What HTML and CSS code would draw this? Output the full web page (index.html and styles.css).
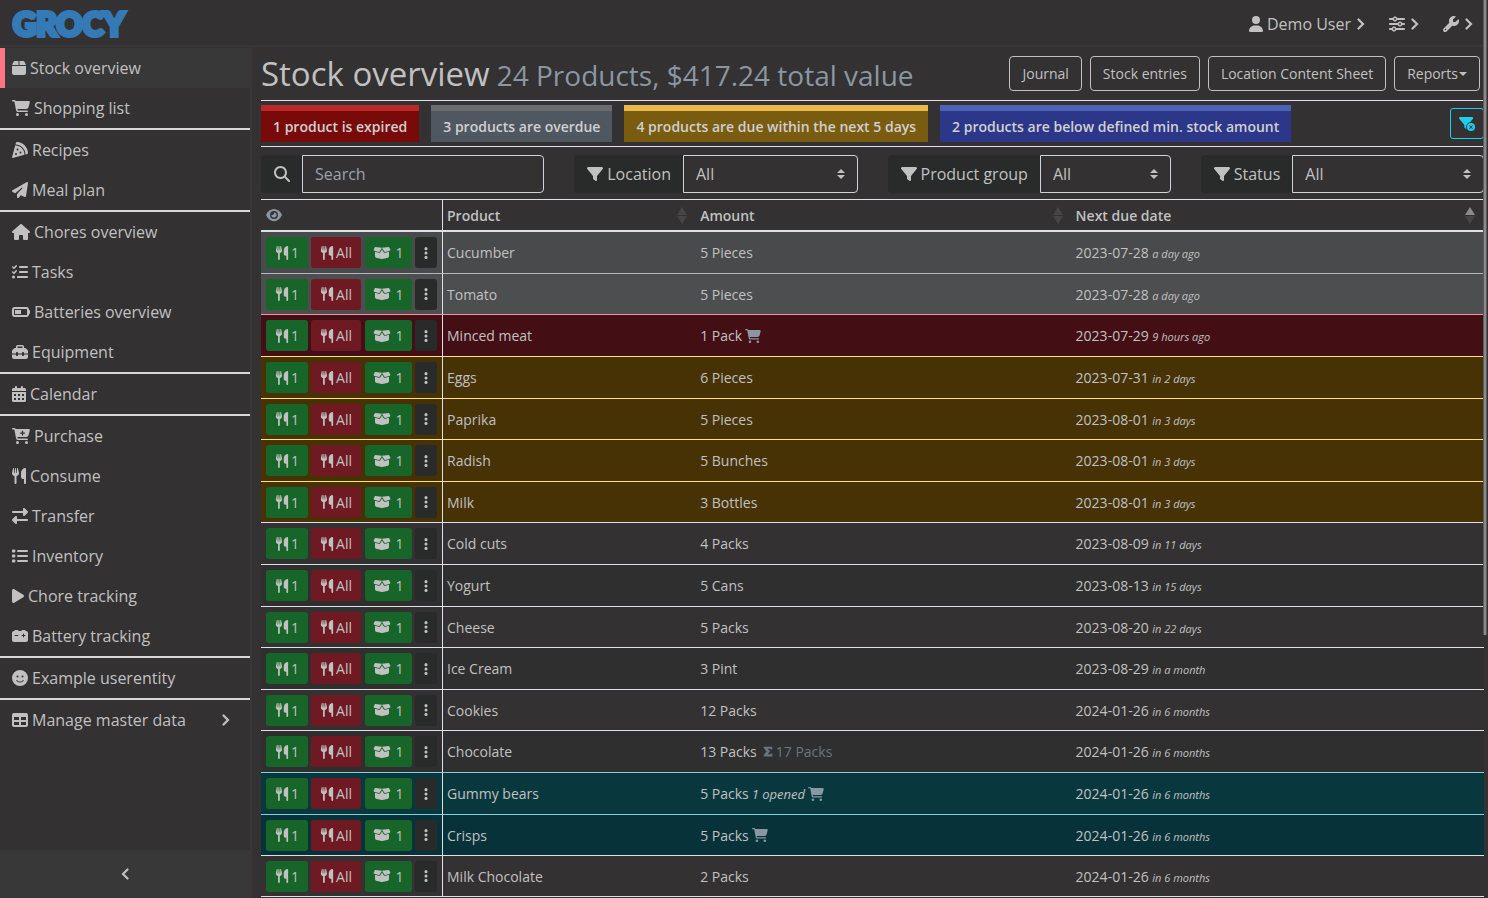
FILE: index.html
```html
<!DOCTYPE html>
<html lang="en">
<head>
<meta charset="utf-8">
<title>Stock overview</title>
<link rel="stylesheet" href="styles.css">
</head>
<body>
<svg class="sprite" aria-hidden="true">
  <symbol id="box" viewBox="0 0 448 512"><path d="M50.7 58.5L0 160H208V32H93.7C75.5 32 58.9 42.3 50.7 58.5zM240 160H448L397.3 58.5C389.1 42.3 372.5 32 354.3 32H240V160zm208 32H0V416c0 35.3 28.7 64 64 64H384c35.3 0 64-28.7 64-64V192z"/></symbol>
  <symbol id="cart" viewBox="0 0 576 512"><path d="M0 24C0 10.7 10.7 0 24 0H69.5c22 0 41.5 12.8 50.6 32h411c26.3 0 45.5 25 38.6 50.4l-41 152.3c-8.5 31.4-37 53.3-69.5 53.3H170.7l5.4 28.5c2.2 11.3 12.1 19.5 23.6 19.5H488c13.3 0 24 10.7 24 24s-10.7 24-24 24H199.7c-34.6 0-64.3-24.6-70.7-58.5L77.4 54.5c-.7-3.8-4-6.5-7.9-6.5H24C10.7 48 0 37.3 0 24zM128 464a48 48 0 1 1 96 0 48 48 0 1 1 -96 0zm336-48a48 48 0 1 1 0 96 48 48 0 1 1 0-96z"/></symbol>
  <symbol id="cart-plus" viewBox="0 0 576 512"><path fill-rule="evenodd" d="M0 24C0 10.7 10.7 0 24 0H69.5c22 0 41.5 12.8 50.6 32h411c26.3 0 45.5 25 38.6 50.4l-41 152.3c-8.5 31.4-37 53.3-69.5 53.3H170.7l5.4 28.5c2.2 11.3 12.1 19.5 23.6 19.5H488c13.3 0 24 10.7 24 24s-10.7 24-24 24H199.7c-34.6 0-64.3-24.6-70.7-58.5L77.4 54.5c-.7-3.8-4-6.5-7.9-6.5H24C10.7 48 0 37.3 0 24zM128 464a48 48 0 1 1 96 0 48 48 0 1 1 -96 0zm336-48a48 48 0 1 1 0 96 48 48 0 1 1 0-96zM252 160c0 11 9 20 20 20h44v44c0 11 9 20 20 20s20-9 20-20V180h44c11 0 20-9 20-20s-9-20-20-20H356V96c0-11-9-20-20-20s-20 9-20 20v44H272c-11 0-20 9-20 20z"/></symbol>
  <symbol id="pizza" viewBox="0 0 512 512"><path d="M169.7 .9c-22.8-1.6-41.9 14-47.5 34.7L110.4 80c.5 0 1.1 0 1.6 0c176.7 0 320 143.3 320 320c0 .5 0 1.1 0 1.6l44.4-11.8c20.8-5.5 36.3-24.7 34.7-47.5C498.5 159.5 352.5 13.5 169.7 .9zM399.8 410.2c.1-3.4 .2-6.8 .2-10.2c0-159.1-128.9-288-288-288c-3.4 0-6.8 .1-10.2 .2L.5 491.9c-1.5 5.5 .1 11.4 4.1 15.4s9.9 5.6 15.4 4.1L399.8 410.2zM176 208a32 32 0 1 1 0 64 32 32 0 1 1 0-64zm64 128a32 32 0 1 1 64 0 32 32 0 1 1 -64 0zM96 384a32 32 0 1 1 64 0 32 32 0 1 1 -64 0z"/></symbol>
  <symbol id="plane" viewBox="0 0 512 512"><path d="M498.1 5.6c10.1 7 15.4 19.1 13.5 31.2l-64 416c-1.5 9.7-7.4 18.2-16 23s-18.9 5.4-28 1.6L284 427.7l-68.5 74.1c-8.9 9.7-22.9 12.9-35.2 8.1S160 493.2 160 480V396.4c0-4 1.5-7.8 4.2-10.7L331.8 202.8c5.8-6.3 5.6-16-.4-22s-15.7-6.4-22-.7L106 360.8 17.7 316.6C7.1 311.3 .3 300.7 0 288.9s5.9-22.8 16.1-28.7l448-256c10.7-6.1 23.9-5.5 34 1.4z"/></symbol>
  <symbol id="house" viewBox="0 0 576 512"><path d="M575.8 255.5c0 18-15 32.1-32 32.1h-32l.7 160.2c0 2.7-.2 5.4-.5 8.1V472c0 22.1-17.9 40-40 40H392c-22.1 0-40-17.9-40-40V384c0-17.7-14.3-32-32-32H256c-17.7 0-32 14.3-32 32v88c0 22.1-17.9 40-40 40H104c-22.1 0-40-17.9-40-40V287.6H32c-18 0-32-14-32-32.1c0-9 3-17 10-24L266.4 8c7-7 15-8 22-8s15 2 21 7L564.8 231.5c8 7 12 15 11 24z"/></symbol>
  <symbol id="tasks" viewBox="0 0 512 512"><path d="M152.1 38.2c9.9 8.9 10.7 24 1.8 33.9l-72 80c-4.4 4.9-10.6 7.8-17.2 7.9s-12.9-2.4-17.6-7L7 113C-2.3 103.6-2.3 88.4 7 79s24.6-9.4 33.9 0l22.1 22.1 55.1-61.2c8.9-9.9 24-10.7 33.9-1.8zm0 160c9.9 8.9 10.7 24 1.8 33.9l-72 80c-4.4 4.9-10.6 7.8-17.2 7.9s-12.9-2.4-17.6-7L7 273c-9.4-9.4-9.4-24.6 0-33.9s24.6-9.4 33.9 0l22.1 22.1 55.1-61.2c8.9-9.9 24-10.7 33.9-1.8zM224 96c0-17.7 14.3-32 32-32H480c17.7 0 32 14.3 32 32s-14.3 32-32 32H256c-17.7 0-32-14.3-32-32zm0 160c0-17.7 14.3-32 32-32H480c17.7 0 32 14.3 32 32s-14.3 32-32 32H256c-17.7 0-32-14.3-32-32zM160 416c0-17.7 14.3-32 32-32H480c17.7 0 32 14.3 32 32s-14.3 32-32 32H192c-17.7 0-32-14.3-32-32zM48 368a48 48 0 1 1 0 96 48 48 0 1 1 0-96z"/></symbol>
  <symbol id="battery" viewBox="0 0 576 512"><path fill-rule="evenodd" d="M80 96C35.800 96 0 131.800 0 176V336c0 44.200 35.800 80 80 80H464c44.200 0 80-35.800 80-80V320c17.700 0 32-14.300 32-32V224c0-17.700-14.300-32-32-32V176c0-44.200-35.800-80-80-80H80zM80 160H464a16 16 0 0 1 16 16V336a16 16 0 0 1-16 16H80a16 16 0 0 1-16-16V176a16 16 0 0 1 16-16z"/><path d="M96 192H288V320H96z"/></symbol>
  <symbol id="toolbox" viewBox="0 0 512 512"><path d="M176 88v40H336V88c0-4.400-3.600-8-8-8H184c-4.400 0-8 3.600-8 8zm-48 40V88c0-30.900 25.100-56 56-56H328c30.900 0 56 25.100 56 56v40h28.100c12.700 0 24.900 5.100 33.900 14.100l51.900 51.900c9 9 14.100 21.200 14.100 33.900V304H384V288c0-17.700-14.300-32-32-32s-32 14.300-32 32v16H192V288c0-17.700-14.300-32-32-32s-32 14.300-32 32v16H0V227.900c0-12.700 5.100-24.900 14.100-33.900l51.900-51.900c9-9 21.200-14.100 33.900-14.100H128zM0 416V336H128v16c0 17.700 14.300 32 32 32s32-14.300 32-32V336H320v16c0 17.700 14.300 32 32 32s32-14.300 32-32V336H512v80c0 35.300-28.700 64-64 64H64c-35.300 0-64-28.700-64-64z"/></symbol>
  <symbol id="calendar" viewBox="0 0 448 512"><path fill-rule="evenodd" d="M128 0c17.700 0 32 14.300 32 32V64H288V32c0-17.700 14.300-32 32-32s32 14.300 32 32V64h48c26.500 0 48 21.500 48 48v48H0V112C0 85.500 21.500 64 48 64H96V32c0-17.700 14.300-32 32-32zM0 192H448V464c0 26.500-21.500 48-48 48H48c-26.500 0-48-21.500-48-48zM64 256h64v64H64zM192 256h64v64H192zM320 256h64v64H320zM64 384h64v64H64zM192 384h64v64H192zM320 384h64v64H320z"/></symbol>
  <symbol id="utensils" viewBox="0 0 448 512"><path d="M416 0C400 0 288 32 288 176V288c0 35.300 28.700 64 64 64h32V480c0 17.700 14.300 32 32 32s32-14.300 32-32V32c0-17.700-14.300-32-32-32zM64 16C64 7.800 57.900 1 49.700 .1S34.200 4.600 32.400 12.500L2.100 148.800C.7 155.100 0 161.500 0 167.900c0 45.900 35.100 83.600 80 87.700V480c0 17.700 14.300 32 32 32s32-14.300 32-32V255.600c44.900-4.100 80-41.800 80-87.700c0-6.400-.7-12.800-2.100-19.100L191.600 12.500c-1.800-8-9.300-13.300-17.400-12.400S160 7.800 160 16V150.200c0 5.400-4.400 9.800-9.800 9.800c-5.100 0-9.300-3.900-9.800-9L127.900 14.600C127.200 6.300 120.300 0 112 0s-15.200 6.300-15.900 14.600L83.700 151c-.5 5.100-4.700 9-9.800 9c-5.400 0-9.800-4.400-9.800-9.800V16z"/></symbol>
  <symbol id="transfer" viewBox="0 0 512 512"><path d="M32 96H352V32c0-12.900 7.800-24.600 19.800-29.600s25.700-2.200 34.900 6.900l96 96c6 6 9.400 14.100 9.400 22.600s-3.400 16.600-9.400 22.600l-96 96c-9.200 9.200-22.900 11.900-34.900 6.900s-19.800-16.600-19.800-29.600V160H32c-17.700 0-32-14.300-32-32s14.300-32 32-32zM480 352c17.700 0 32 14.300 32 32s-14.300 32-32 32H160v64c0 12.900-7.800 24.600-19.800 29.600s-25.700 2.200-34.900-6.900l-96-96c-6-6-9.400-14.100-9.400-22.600s3.400-16.600 9.400-22.600l96-96c9.200-9.200 22.900-11.900 34.900-6.900s19.800 16.600 19.800 29.600v64H480z"/></symbol>
  <symbol id="list" viewBox="0 0 512 512"><rect x="0" y="48" width="104" height="96" rx="24"/><rect x="0" y="208" width="104" height="96" rx="24"/><rect x="0" y="368" width="104" height="96" rx="24"/><rect x="160" y="64" width="352" height="64" rx="32"/><rect x="160" y="224" width="352" height="64" rx="32"/><rect x="160" y="384" width="352" height="64" rx="32"/></symbol>
  <symbol id="play" viewBox="0 0 384 512"><path d="M73 39c-14.800-9.100-33.400-9.400-48.500-.9S0 62.600 0 80V432c0 17.400 9.400 33.400 24.500 41.900s33.700 8.100 48.500-.9L361 297c14.300-8.700 23-24.200 23-41s-8.700-32.200-23-41L73 39z"/></symbol>
  <symbol id="car-battery" viewBox="0 0 512 512"><path d="M80 96c0-17.700 14.300-32 32-32h64c17.700 0 32 14.300 32 32h96c0-17.700 14.300-32 32-32h64c17.700 0 32 14.300 32 32h16c35.300 0 64 28.700 64 64V384c0 35.300-28.700 64-64 64H64c-35.300 0-64-28.700-64-64V160c0-35.300 28.700-64 64-64zm304 96c0-8.800-7.200-16-16-16s-16 7.200-16 16v32H320c-8.800 0-16 7.200-16 16s7.200 16 16 16h32v32c0 8.800 7.200 16 16 16s16-7.200 16-16V256h32c8.800 0 16-7.200 16-16s-7.200-16-16-16H384V192zM80 240c0 8.800 7.200 16 16 16h96c8.800 0 16-7.200 16-16s-7.200-16-16-16H96c-8.800 0-16 7.200-16 16z"/></symbol>
  <symbol id="smile" viewBox="0 0 512 512"><path d="M256 512A256 256 0 1 0 256 0a256 256 0 1 0 0 512zM164.100 325.500C182 346.200 212.600 368 256 368s74-21.800 91.900-42.500c5.800-6.700 15.900-7.400 22.600-1.600s7.400 15.900 1.600 22.600C349.800 372.100 311.100 400 256 400s-93.800-27.900-116.100-53.500c-5.800-6.700-5.100-16.800 1.600-22.600s16.800-5.100 22.600 1.600zM144.400 208a32 32 0 1 1 64 0 32 32 0 1 1 -64 0zm192-32a32 32 0 1 1 0 64 32 32 0 1 1 0-64z"/></symbol>
  <symbol id="table" viewBox="0 0 512 512"><path d="M64 256V160H224v96H64zm0 64H224v96H64V320zm224 96V320H448v96H288zM448 256H288V160H448v96zM64 32C28.700 32 0 60.700 0 96V416c0 35.300 28.700 64 64 64H448c35.300 0 64-28.700 64-64V96c0-35.300-28.700-64-64-64H64z"/></symbol>
  <symbol id="user" viewBox="0 0 448 512"><path d="M224 256A128 128 0 1 0 224 0a128 128 0 1 0 0 256zm-45.700 48C79.800 304 0 383.800 0 482.300C0 498.700 13.300 512 29.700 512H418.300c16.400 0 29.700-13.300 29.700-29.700C448 383.800 368.200 304 269.700 304H178.300z"/></symbol>
  <symbol id="sliders" viewBox="0 0 512 512"><path d="M0 416c0 17.700 14.300 32 32 32h54.700c12.300 28.300 40.500 48 73.300 48s61-19.700 73.300-48H480c17.700 0 32-14.300 32-32s-14.300-32-32-32H233.300c-12.300-28.300-40.500-48-73.300-48s-61 19.700-73.300 48H32c-17.700 0-32 14.300-32 32zm128 0a32 32 0 1 1 64 0 32 32 0 1 1 -64 0zM320 256a32 32 0 1 1 64 0 32 32 0 1 1 -64 0zm32-80c-32.800 0-61 19.700-73.300 48H32c-17.700 0-32 14.300-32 32s14.300 32 32 32h246.700c12.300 28.300 40.500 48 73.300 48s61-19.700 73.300-48H480c17.700 0 32-14.300 32-32s-14.300-32-32-32h-54.700c-12.300-28.300-40.500-48-73.300-48zM192 128a32 32 0 1 1 0-64 32 32 0 1 1 0 64zm73.300-64C253 35.700 224.800 16 192 16s-61 19.700-73.300 48H32C14.300 64 0 78.300 0 96s14.300 32 32 32h86.700c12.300 28.300 40.500 48 73.300 48s61-19.700 73.300-48H480c17.700 0 32-14.300 32-32s-14.300-32-32-32H265.300z"/></symbol>
  <symbol id="wrench" viewBox="0 0 512 512"><path d="M352 320c88.400 0 160-71.600 160-160c0-15.300-2.200-30.100-6.200-44.200c-3.100-10.800-16.400-13.200-24.300-5.300l-76.800 76.800c-3 3-7.100 4.700-11.300 4.700H336c-8.800 0-16-7.200-16-16V118.600c0-4.200 1.700-8.300 4.700-11.300l76.800-76.800c7.900-7.900 5.400-21.200-5.300-24.300C382.100 2.200 367.300 0 352 0C263.600 0 192 71.600 192 160c0 19.100 3.400 37.500 9.500 54.500L19.900 396.100C7.200 408.800 0 426.100 0 444.100C0 481.600 30.400 512 67.900 512c18 0 35.300-7.200 48-19.900L297.500 310.500c17 6.200 35.400 9.500 54.500 9.500zM80 408a24 24 0 1 1 0 48 24 24 0 1 1 0-48z"/></symbol>
  <symbol id="chevron" viewBox="0 0 8 12"><path d="M1.500 1.500L6 6 1.500 10.500" fill="none" stroke="currentColor" stroke-width="2.200" stroke-linecap="round"/></symbol>
  <symbol id="chevron-left" viewBox="0 0 8 12"><path d="M6.500 1.500L2 6 6.500 10.500" fill="none" stroke="currentColor" stroke-width="2.200" stroke-linecap="round"/></symbol>
  <symbol id="search" viewBox="0 0 512 512"><path d="M416 208c0 45.900-14.900 88.300-40 122.700L502.600 457.400c12.500 12.500 12.500 32.800 0 45.300s-32.800 12.500-45.300 0L330.700 376c-34.400 25.200-76.800 40-122.700 40C93.100 416 0 322.900 0 208S93.100 0 208 0S416 93.100 416 208zM208 352a144 144 0 1 0 0-288 144 144 0 1 0 0 288z"/></symbol>
  <symbol id="filter" viewBox="0 0 512 512"><path d="M3.900 54.900C10.500 40.900 24.500 32 40 32H472c15.500 0 29.500 8.900 36.100 22.900s4.600 30.500-5.200 42.500L320 320.900V448c0 12.100-6.800 23.200-17.700 28.600s-23.800 4.300-33.500-3l-64-48c-8.100-6-12.800-15.500-12.800-25.600V320.900L9 97.300C-.7 85.400-2.800 68.800 3.900 54.900z"/></symbol>
  <symbol id="filter-x" viewBox="0 0 576 512"><path d="M3.900 22.900C10.500 8.900 24.500 0 40 0H472c15.500 0 29.500 8.900 36.100 22.900s4.600 30.500-5.200 42.500L396.400 195.600C316.200 212.100 256 283 256 368c0 27.400 6.300 53.400 17.500 76.500c-1.600-.8-3.200-1.800-4.700-2.900l-64-48c-8.100-6-12.800-15.500-12.800-25.600V288.900L9 65.300C-.7 53.400-2.800 36.800 3.900 22.900zM432 224a144 144 0 1 1 0 288 144 144 0 1 1 0-288zm59.300 107.300c6.200-6.200 6.200-16.400 0-22.600s-16.400-6.200-22.600 0L432 345.400l-36.700-36.700c-6.200-6.200-16.400-6.200-22.600 0s-6.200 16.400 0 22.600L409.400 368l-36.700 36.700c-6.200 6.200-6.200 16.400 0 22.600s16.400 6.200 22.600 0L432 390.600l36.700 36.700c6.200 6.200 16.400 6.200 22.600 0s6.200-16.400 0-22.600L454.600 368l36.700-36.700z"/></symbol>
  <symbol id="eye" viewBox="0 0 576 512"><path d="M288 32c-80.800 0-145.500 36.800-192.600 80.600C48.600 156 17.300 208 2.500 243.700c-3.300 7.900-3.300 16.700 0 24.600C17.300 304 48.600 356 95.400 399.400C142.500 443.200 207.200 480 288 480s145.500-36.800 192.600-80.600c46.800-43.500 78.100-95.400 93-131.100c3.300-7.900 3.300-16.700 0-24.600c-14.900-35.700-46.200-87.700-93-131.100C433.500 68.800 368.800 32 288 32zM144 256a144 144 0 1 1 288 0 144 144 0 1 1 -288 0zm144-64c0 35.300-28.700 64-64 64c-7.100 0-13.900-1.200-20.300-3.300c-5.500-1.800-11.900 1.600-11.700 7.400c.3 6.900 1.300 13.800 3.200 20.700c13.700 51.200 66.400 81.600 117.600 67.900s81.600-66.400 67.900-117.600c-11.100-41.500-47.800-69.400-88.600-71.100c-5.800-.2-9.200 6.100-7.400 11.700c2.100 6.400 3.300 13.200 3.300 20.300z"/></symbol>
  <symbol id="box-open" viewBox="0 0 640 512"><path d="M58.900 42.100c3-6.100 9.600-9.600 16.300-8.700L320 64 564.800 33.400c6.700-.8 13.300 2.700 16.300 8.700l41.700 83.400c9 17.900-.6 39.600-19.800 45.100L439.600 217.300c-13.900 4-28.800-1.900-36.200-14.300L320 64 236.600 203c-7.400 12.400-22.300 18.300-36.200 14.300L37.100 170.600c-19.300-5.500-28.800-27.200-19.800-45.100L58.900 42.100zM321.100 128l54.900 91.400c14.900 24.800 44.600 36.600 72.500 28.600L576 211.600v167c0 22-15 41.200-36.400 46.600l-204.100 51c-10.200 2.600-20.900 2.600-31 0l-204.100-51C79 419.700 64 400.500 64 378.500v-167L191.600 248c27.800 8 57.600-3.800 72.500-28.600L318.900 128h2.200z"/></symbol>
  <symbol id="dots" viewBox="0 0 128 512"><circle cx="64" cy="96" r="56"/><circle cx="64" cy="256" r="56"/><circle cx="64" cy="416" r="56"/></symbol>
  <symbol id="sigma" viewBox="0 0 384 512"><path d="M24 64H360V176H304L288 144H180L272 250 180 368H288L304 336H360V448H24V396L136 256 24 116z"/></symbol>
  <symbol id="spin" viewBox="0 0 8 10"><path d="M4 0L8 4H0zM0 6H8L4 10z"/></symbol>
</svg>

<header class="topbar">
  <a class="logo" href="#">GROCY</a>
  <nav class="topnav" aria-label="User">
    <a href="#"><svg class="i w14"><use href="#user"/></svg><span>Demo User</span><svg class="chev"><use href="#chevron"/></svg></a>
    <a href="#" aria-label="View settings"><svg class="i w16"><use href="#sliders"/></svg><svg class="chev"><use href="#chevron"/></svg></a>
    <a href="#" aria-label="Settings"><svg class="i w16"><use href="#wrench"/></svg><svg class="chev"><use href="#chevron"/></svg></a>
  </nav>
</header>

<div class="shell">
  <aside class="sidebar">
    <nav class="menu" aria-label="Main">
      <a class="active" href="#"><svg class="i w14"><use href="#box"/></svg>Stock overview</a>
      <a href="#"><svg class="i w18"><use href="#cart"/></svg>Shopping list</a>
      <a class="line" href="#"><svg class="i w16"><use href="#pizza"/></svg>Recipes</a>
      <a href="#"><svg class="i w16"><use href="#plane"/></svg>Meal plan</a>
      <a class="line" href="#"><svg class="i w18"><use href="#house"/></svg>Chores overview</a>
      <a href="#"><svg class="i w16"><use href="#tasks"/></svg>Tasks</a>
      <a href="#"><svg class="i w18"><use href="#battery"/></svg>Batteries overview</a>
      <a href="#"><svg class="i w16"><use href="#toolbox"/></svg>Equipment</a>
      <a class="line" href="#"><svg class="i w14"><use href="#calendar"/></svg>Calendar</a>
      <a class="line" href="#"><svg class="i w18"><use href="#cart-plus"/></svg>Purchase</a>
      <a href="#"><svg class="i w14"><use href="#utensils"/></svg>Consume</a>
      <a href="#"><svg class="i w16"><use href="#transfer"/></svg>Transfer</a>
      <a href="#"><svg class="i w16"><use href="#list"/></svg>Inventory</a>
      <a href="#"><svg class="i w12"><use href="#play"/></svg>Chore tracking</a>
      <a href="#"><svg class="i w16"><use href="#car-battery"/></svg>Battery tracking</a>
      <a class="line" href="#"><svg class="i w16"><use href="#smile"/></svg>Example userentity</a>
      <a class="line" href="#"><svg class="i w16"><use href="#table"/></svg>Manage master data<svg class="chev more"><use href="#chevron"/></svg></a>
    </nav>
    <button class="collapse" type="button" aria-label="Collapse sidebar"><svg class="chev"><use href="#chevron-left"/></svg></button>
  </aside>

  <main class="content">
    <div class="title-row">
      <h1>Stock overview <small>24 Products, $417.24 total value</small></h1>
      <div class="actions">
        <button type="button">Journal</button>
        <button type="button">Stock entries</button>
        <button type="button">Location Content Sheet</button>
        <button type="button">Reports<span class="caret"></span></button>
      </div>
    </div>

    <div class="notices">
      <button type="button" class="notice expired">1 product is expired</button>
      <button type="button" class="notice overdue">3 products are overdue</button>
      <button type="button" class="notice due">4 products are due within the next 5 days</button>
      <button type="button" class="notice missing">2 products are below defined min. stock amount</button>
      <button type="button" class="clear" aria-label="Clear filter"><svg class="i w16"><use href="#filter-x"/></svg></button>
    </div>

    <div class="filters">
      <div class="group">
        <label for="q" aria-label="Search"><svg class="i w16"><use href="#search"/></svg></label>
        <input id="q" type="text" placeholder="Search">
      </div>
      <div class="group">
        <label for="location"><svg class="i w16"><use href="#filter"/></svg>Location</label>
        <span class="pick"><select id="location"><option>All</option></select><svg class="spin"><use href="#spin"/></svg></span>
      </div>
      <div class="group">
        <label for="pgroup"><svg class="i w16"><use href="#filter"/></svg>Product group</label>
        <span class="pick"><select id="pgroup"><option>All</option></select><svg class="spin"><use href="#spin"/></svg></span>
      </div>
      <div class="group">
        <label for="status"><svg class="i w16"><use href="#filter"/></svg>Status</label>
        <span class="pick"><select id="status"><option>All</option></select><svg class="spin"><use href="#spin"/></svg></span>
      </div>
    </div>

    <table class="stock">
      <colgroup><col class="c-tools"><col class="c-product"><col class="c-amount"><col></colgroup>
      <thead>
        <tr>
          <th><svg class="i w16 eye"><use href="#eye"/></svg></th>
          <th><span class="head">Product<span class="sort"></span></span></th>
          <th><span class="head">Amount<span class="sort"></span></span></th>
          <th><span class="head">Next due date<span class="sort asc"></span></span></th>
        </tr>
      </thead>
      <tbody id="rows"></tbody>
    </table>
  </main>
</div>
<div class="scroll-thumb"></div>
<script src="app.js"></script>
</body>
</html>
```
FILE: styles.css
```css
* { box-sizing: border-box; }

body {
  margin: 0;
  height: 100vh;
  display: flex;
  flex-direction: column;
  overflow: hidden;
  background: #333132;
  color: #c1c1c1;
  font: 16px/24px "Open Sans", "Noto Sans", sans-serif;
}

a { color: inherit; text-decoration: none; }
button, input, select { font: inherit; color: inherit; margin: 0; }

.sprite { position: absolute; width: 0; height: 0; }
.i { height: 16px; fill: currentColor; flex: none; }
.w10 { width: 10px; }
.w12 { width: 12px; }
.w14 { width: 14px; }
.w16 { width: 16px; }
.w18 { width: 18px; }
.chev { width: 8px; height: 12px; flex: none; }

.topbar {
  display: flex;
  align-items: center;
  justify-content: space-between;
  height: 47px;
  flex: none;
  padding: 2px 15px 0 13px;
  border-bottom: 2px solid #383838;
}
.logo {
  color: #337ab7;
  font: 900 32px/44px Lato, sans-serif;
  -webkit-text-stroke: 4px #337ab7;
}
.topnav { display: flex; gap: 24px; }
.topnav a { display: flex; align-items: center; gap: 4px; }
.topnav .chev { margin-left: 2px; }

.shell { flex: 1; display: flex; min-height: 0; }

.sidebar {
  width: 252px;
  flex: none;
  display: flex;
  flex-direction: column;
  justify-content: space-between;
  border-right: 2px solid #383838;
}
.menu { padding-top: 1px; }
.menu a {
  display: flex;
  align-items: center;
  gap: 4px;
  height: 40px;
  padding: 0 20px 0 12px;
}
.menu .line { height: 42px; border-top: 2px solid #d8d8d8; }
.menu .active { background: #383838; border-left: 5px solid #ff7482; padding-left: 7px; }
.menu .more { margin-left: auto; }
.collapse {
  height: 48px;
  border: 0;
  background: #383838;
  display: flex;
  align-items: center;
  justify-content: center;
}

.content { flex: 1; min-width: 0; padding: 0 4px 0 9px; }

.title-row {
  display: flex;
  align-items: center;
  justify-content: space-between;
  height: 53px;
  padding-right: 4px;
}
h1 {
  display: flex;
  align-items: baseline;
  gap: 7px;
  margin: 0;
  padding-top: 2px;
  font-weight: 400;
  font-size: 33px;
  line-height: 40px;
  white-space: nowrap;
}
h1 small { font-size: 28px; color: #8a97a3; }
.actions { display: flex; gap: 8px; }
.actions button {
  height: 35px;
  padding: 0 12px;
  border: 1px solid #c1c1c1;
  border-radius: 4px;
  background: none;
  font-size: 14px;
  white-space: nowrap;
}
.caret {
  display: inline-block;
  margin-left: 1px;
  vertical-align: 3px;
  border: 4px solid transparent;
  border-top-color: currentColor;
  border-bottom: 0;
}

.notices {
  display: flex;
  align-items: center;
  gap: 12px;
  height: 47px;
  border-top: 1px solid #dee2e6;
  border-bottom: 1px solid #dee2e6;
}
.notice {
  height: 37px;
  padding: 0 12px;
  border: 0;
  border-top: 6px solid;
  font-size: 14px;
  font-weight: 600;
  color: #d0d0d0;
  white-space: nowrap;
}
.expired { background: #780a0a; border-color: #bb2828; }
.overdue { background: #4f5861; border-color: #6a6c6d; }
.due { background: #7a5c10; border-color: #ebb94a; }
.missing { background: #2c3789; border-color: #4c62b5; }
.clear {
  margin-left: auto;
  width: 34px;
  height: 31px;
  padding: 0;
  border: 1px solid #1dcfee;
  border-radius: 3px;
  background: none;
  color: #1dcfee;
  display: flex;
  align-items: center;
  justify-content: center;
}

.filters {
  display: grid;
  grid-template-columns: repeat(4, 1fr);
  gap: 30px;
  padding: 8px 0 6px;
}
.group { display: flex; height: 38px; min-width: 0; }
.group label {
  display: flex;
  align-items: center;
  gap: 4px;
  padding: 0 12px 0 13px;
  background: #292b2a;
  border-radius: 4px 0 0 4px;
  white-space: nowrap;
}
.group input, .group select {
  flex: 1;
  width: 100%;
  height: 38px;
  min-width: 0;
  padding: 0 12px;
  border: 1px solid #ced4da;
  border-radius: 0 4px 4px 0;
  background: none;
  appearance: none;
}
.group input::placeholder { color: #9ba3ab; opacity: 1; }
.pick { flex: 1; min-width: 0; position: relative; }
.spin {
  position: absolute;
  right: 13px;
  top: 14px;
  width: 8px;
  height: 10px;
  fill: #c1c1c1;
  pointer-events: none;
}

.stock {
  width: 100%;
  table-layout: fixed;
  border-collapse: separate;
  border-spacing: 0;
  font-size: 14px;
  line-height: 21px;
}
.c-tools { width: 182px; }
.c-product { width: 20.7%; }
.c-amount { width: 30.7%; }
.stock th {
  height: 33px;
  padding: 0 4px;
  text-align: left;
  font-weight: 600;
  border-top: 1px solid #dee2e6;
  border-bottom: 2px solid #dee2e6;
}
.stock th:first-child, .stock td:first-child { border-right: 1px solid #dee2e6; padding: 0 0 0 5px; }
.eye { display: block; height: 14px; color: #8a97a3; }
.head { display: flex; align-items: center; justify-content: space-between; }
.sort { display: flex; flex-direction: column; gap: 1px; margin-right: 5px; }
.sort::before, .sort::after { content: ""; border: 5px solid transparent; }
.sort::before { border-top: 0; border-bottom: 8px solid #474646; }
.sort::after { border-bottom: 0; border-top: 8px solid #474646; }
.asc::before { border-bottom-color: #8a8a8a; }

.stock td {
  height: 42px;
  padding: 0 4px;
  border-top: 1px solid #dee2e6;
  white-space: nowrap;
}
.stock tr:nth-child(5n) td, .stock tr:nth-child(5n+2) td { height: 41px; }
.stock tbody tr:first-child td { height: 41px; border-top: 0; }
.stock tbody tr:last-child td { border-bottom: 1px solid #dee2e6; }
.plain:nth-child(odd) { background: #2f2f2f; }
.secondary { background: #4c4e4f; }
.secondary:nth-child(odd) { background: #494a4b; }
.danger { background: #430f14; }
.warning { background: #463205; }
.info { background: #08383e; }
.info:nth-child(odd) { background: #07323a; }
.stock .secondary td { border-top-color: #b3b7bb; }
.stock .danger td { border-top-color: #ed969e; }
.stock .warning td { border-top-color: #ffdf7e; }
.stock .info td { border-top-color: #86cfda; }

.tools { display: flex; gap: 3px; }
.tools button {
  display: flex;
  align-items: center;
  justify-content: center;
  gap: 2px;
  height: 31px;
  padding: 0;
  border: 0;
  border-radius: 3px;
}
.tools svg { height: 14px; }
.tools .go { width: 42px; background: #18652a; }
.tools .all { width: 50px; background: #6f1a22; }
.tools .open { width: 47px; background: #18652a; margin-left: 1px; gap: 4px; }
.tools .menu-btn { width: 22px; background: #292b2a; }
.stock small { font-size: 11px; font-style: italic; line-height: 16px; }
.stock .opened { font-size: 13px; }
.cell { display: flex; align-items: center; gap: 3px; }
.cart { width: 16px; height: 14px; fill: #8a97a3; }
.total { display: flex; align-items: center; gap: 3px; margin-left: 3px; color: #6c757d; }
.total svg { width: 10px; height: 13px; fill: currentColor; }

.scroll-thumb {
  position: absolute;
  top: 0;
  right: 1px;
  width: 4px;
  height: 635px;
  background: #8a8a8a;
  border: solid #5a5a5a;
  border-width: 0 1px;
}
```
FILE: app.js
```js
const products = [
  ["secondary", "Cucumber", "5 Pieces", "2023-07-28", "a day ago"],
  ["secondary", "Tomato", "5 Pieces", "2023-07-28", "a day ago"],
  ["danger", "Minced meat", "1 Pack", "2023-07-29", "9 hours ago", { cart: true }],
  ["warning", "Eggs", "6 Pieces", "2023-07-31", "in 2 days"],
  ["warning", "Paprika", "5 Pieces", "2023-08-01", "in 3 days"],
  ["warning", "Radish", "5 Bunches", "2023-08-01", "in 3 days"],
  ["warning", "Milk", "3 Bottles", "2023-08-01", "in 3 days"],
  ["plain", "Cold cuts", "4 Packs", "2023-08-09", "in 11 days"],
  ["plain", "Yogurt", "5 Cans", "2023-08-13", "in 15 days"],
  ["plain", "Cheese", "5 Packs", "2023-08-20", "in 22 days"],
  ["plain", "Ice Cream", "3 Pint", "2023-08-29", "in a month"],
  ["plain", "Cookies", "12 Packs", "2024-01-26", "in 6 months"],
  ["plain", "Chocolate", "13 Packs", "2024-01-26", "in 6 months", { total: "17 Packs" }],
  ["info", "Gummy bears", "5 Packs", "2024-01-26", "in 6 months", { opened: "1 opened", cart: true }],
  ["info", "Crisps", "5 Packs", "2024-01-26", "in 6 months", { cart: true }],
  ["plain", "Milk Chocolate", "2 Packs", "2024-01-26", "in 6 months"]
];

const icon = (name, cls) => `<svg class="${cls}"><use href="#${name}"/></svg>`;

document.getElementById("rows").innerHTML = products.map(([state, name, amount, date, rel, more = {}]) => `
  <tr class="${state}">
    <td><div class="tools">
      <button type="button" class="go">${icon("utensils", "i w14")}1</button>
      <button type="button" class="all">${icon("utensils", "i w14")}All</button>
      <button type="button" class="open">${icon("box-open", "i w18")}1</button>
      <button type="button" class="menu-btn" aria-label="More">${icon("dots", "i w10")}</button>
    </div></td>
    <td>${name}</td>
    <td><div class="cell"><span>${amount}</span>${more.opened ? `<small class="opened">${more.opened}</small>` : ""}${more.total ? `<span class="total">${icon("sigma", "")}${more.total}</span>` : ""}${more.cart ? icon("cart", "cart") : ""}</div></td>
    <td>${date} <small>${rel}</small></td>
  </tr>`).join("");
```
